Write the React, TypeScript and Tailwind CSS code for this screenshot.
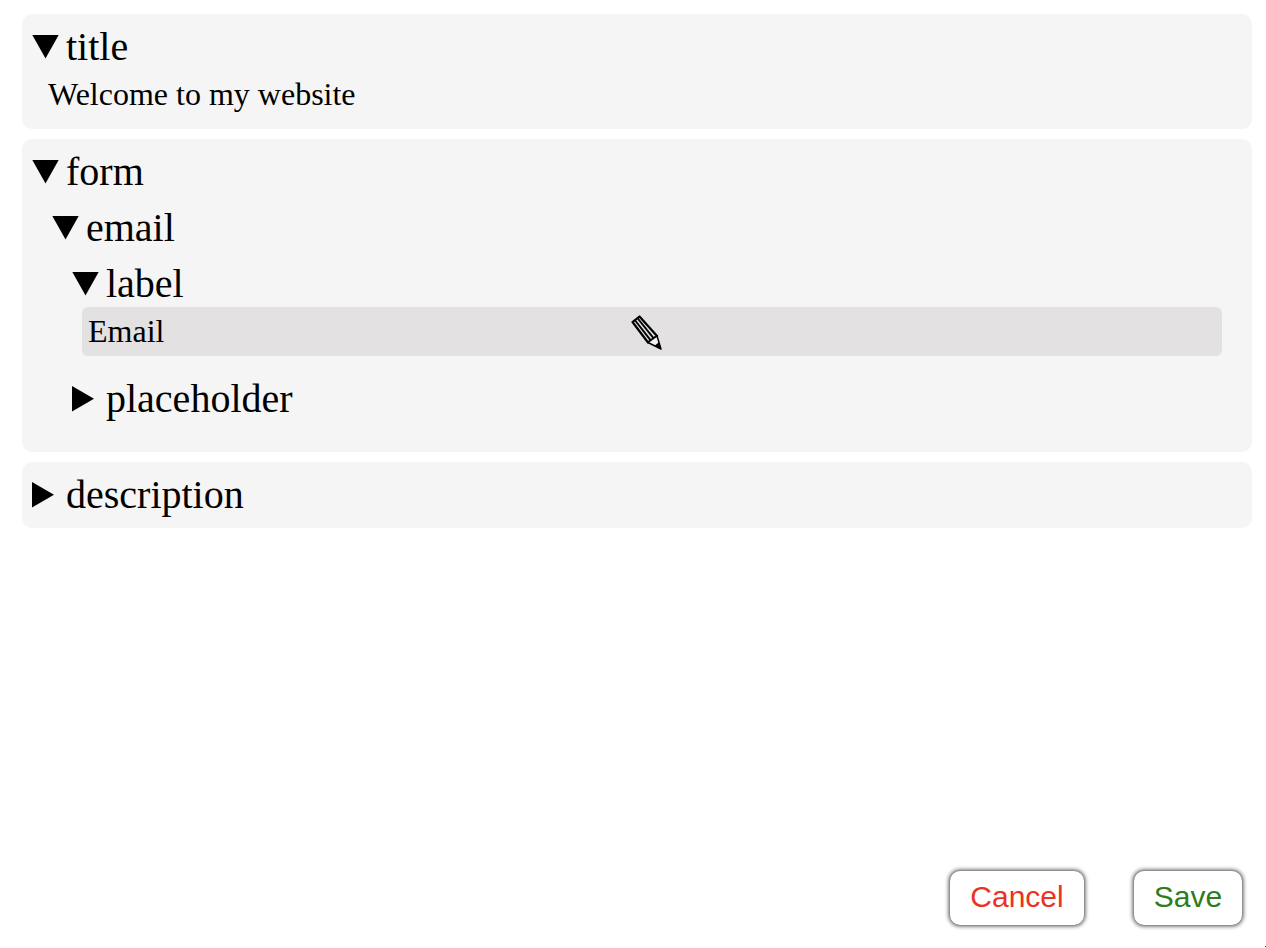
function Down() {
  return (
    <svg width="27" height="24" viewBox="0 0 27 24" className="shrink-0">
      <polygon points="0.3,0 26.7,0 13.5,23.6" fill="#000" />
    </svg>
  );
}

function Right() {
  return (
    <svg width="26" height="26" viewBox="0 0 26 26" className="shrink-0">
      <polygon points="0,0 22,12.75 0,25.5" fill="#000" />
    </svg>
  );
}

function Row({ open, label }: { open: boolean; label: string }) {
  return (
    <div className="flex h-[46px] items-center">
      <div className="flex w-[34px] items-center">{open ? <Down /> : <Right />}</div>
      <span className="text-[40px] leading-[46px] text-black">{label}</span>
    </div>
  );
}

function Pencil() {
  return (
    <svg width="32" height="37" viewBox="0 0 32 37" className="absolute left-[549px] top-[8px]">
      <polygon points="1.5,7 8.5,1.5 26,21 17,27.5" fill="#e3e1e2" stroke="#000" strokeWidth="2.2" strokeLinejoin="round" />
      <line x1="3.8" y1="5" x2="19.5" y2="25.2" stroke="#000" strokeWidth="1.9" />
      <line x1="6.4" y1="3" x2="22.5" y2="23.2" stroke="#000" strokeWidth="1.9" />
      <polygon points="17,27.5 26,21 30,34" fill="#f4f4f4" stroke="#000" strokeWidth="1.5" strokeLinejoin="round" />
      <polygon points="23.8,30.4 28,27.2 30.2,34.4" fill="#000" />
    </svg>
  );
}

function Value({ children, muted }: { children: React.ReactNode; muted?: boolean }) {
  return (
    <div
      className={`relative ml-[10px] flex h-[49px] items-center rounded-md px-[6px] pb-[2px] text-[32px] leading-[36px] text-black ${
        muted ? "mr-[20px] bg-[#e3e1e2]" : ""
      }`}
    >
      {children}
    </div>
  );
}

function Panel({ children }: { children: React.ReactNode }) {
  return <section className="rounded-[10px] bg-[#f5f5f5] p-[10px]">{children}</section>;
}

export default function App() {
  return (
    <div className="relative flex min-h-[948px] flex-col justify-between font-['Liberation_Serif',serif]">
      <main className="flex flex-col gap-[10px] pl-[22px] pr-[14px] pt-[14px]">
        <Panel>
          <Row open label="title" />
          <Value>Welcome to my website</Value>
        </Panel>
        <Panel>
          <Row open label="form" />
          <div className="mt-[10px] pl-[20px]">
            <Row open label="email" />
            <div className="mt-[10px] pb-[20px] pl-[20px]">
              <Row open label="label" />
              <Value muted>
                Email
                <Pencil />
              </Value>
              <div className="mt-[20px]">
                <Row open={false} label="placeholder" />
              </div>
            </div>
          </div>
        </Panel>
        <Panel>
          <Row open={false} label="description" />
        </Panel>
      </main>
      <footer className="flex justify-end gap-[50px] pb-[23px] pr-[24px] font-['Liberation_Sans',sans-serif]">
        <button className="h-[54px] w-[134px] rounded-[10px] bg-white pb-[3px] text-[30px] text-[#ea3323] shadow-[0_0_4px_1px_#444]">
          Cancel
        </button>
        <button className="h-[54px] w-[108px] rounded-[10px] bg-white pb-[3px] text-[30px] text-[#2d7d1a] shadow-[0_0_4px_1px_#444]">
          Save
        </button>
      </footer>
      <div className="absolute bottom-[1px] right-0 h-px w-px bg-[#7a3a3a]" />
    </div>
  );
}
